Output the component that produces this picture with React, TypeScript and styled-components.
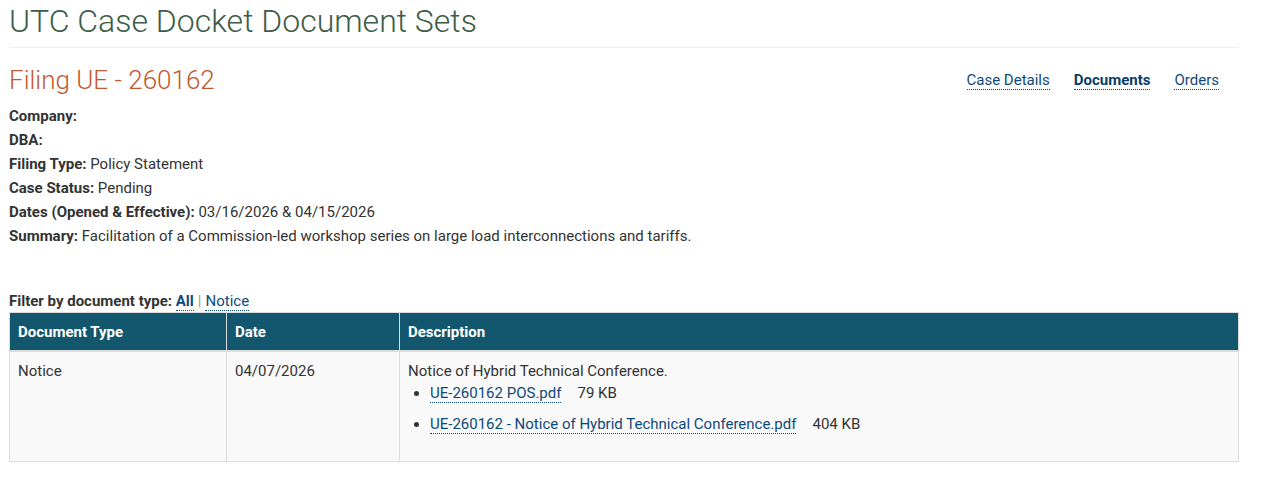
import React from "react";
import styled, { createGlobalStyle, css } from "styled-components";

const GlobalStyle = createGlobalStyle`
  html, body {
    margin: 0;
    padding: 0;
    background: #fff;
    font-family: Roboto, "Liberation Sans", Arial, sans-serif;
    color: #333;
  }
`;

const Page = styled.div`
  width: 1230px;
  padding: 0 9px;
`;

const Title = styled.h1`
  margin: 0;
  padding-top: 1px;
  font-size: 32px;
  font-weight: 300;
  line-height: 40px;
  color: #3d5c49;
  border-bottom: 1px solid #eee;
  padding-bottom: 6px;
`;

const FilingRow = styled.div`
  display: flex;
  justify-content: space-between;
  align-items: flex-start;
  margin-top: 16px;
`;

const FilingTitle = styled.h2`
  margin: 0;
  font-size: 26px;
  font-weight: 300;
  line-height: 32px;
  color: #c4582b;
`;

const Nav = styled.nav`
  display: flex;
  gap: 24px;
  margin-top: 7px;
  margin-right: 20px;
`;

const linkStyle = css`
  color: #0d4a7c;
  text-decoration: none;
  border-bottom: 1px dotted #0d4a7c;
  cursor: pointer;
`;

const NavLink = styled.a<{ $active?: boolean }>`
  ${linkStyle};
  font-size: 15px;
  line-height: 18px;
  font-weight: ${({ $active }) => ($active ? 700 : 400)};
  color: ${({ $active }) => ($active ? "#0b3d66" : "#0d4a7c")};
`;

const Info = styled.div`
  margin-top: 8px;
  font-size: 15px;
  line-height: 24px;
`;

const InfoLine = styled.div`
  b {
    font-weight: 700;
  }
`;

const Filter = styled.div`
  margin-top: 43px;
  font-size: 15px;
  line-height: 20px;
  b {
    font-weight: 700;
  }
`;

const FilterLink = styled.a<{ $active?: boolean }>`
  ${linkStyle};
  font-weight: ${({ $active }) => ($active ? 700 : 400)};
`;

const Sep = styled.span`
  color: #999;
  margin: 0 4px;
`;

const Table = styled.table`
  width: 100%;
  margin-top: 1px;
  border-collapse: collapse;
  border: 1px solid #ddd;
  font-size: 15px;
`;

const Th = styled.th<{ $w?: number }>`
  background: #12576d;
  color: #fff;
  text-align: left;
  font-weight: 700;
  padding: 10px 8px 9px;
  line-height: 18px;
  border-left: 1px solid #ddd;
  border-bottom: 2px solid #ddd;
  width: ${({ $w }) => ($w ? `${$w}px` : "auto")};
`;

const Td = styled.td`
  background: #f9f9f9;
  vertical-align: top;
  padding: 8px 8px 26px;
  line-height: 22px;
  border-left: 1px solid #ddd;
`;

const Files = styled.ul`
  margin: 0;
  padding-left: 22px;
  list-style: disc;
`;

const FileItem = styled.li`
  margin-bottom: 9px;
  &:last-child {
    margin-bottom: 0;
  }
`;

const FileLink = styled.a`
  ${linkStyle};
`;

const Size = styled.span`
  margin-left: 16px;
`;

const files = [
  { name: "UE-260162 POS.pdf", size: "79 KB" },
  { name: "UE-260162 - Notice of Hybrid Technical Conference.pdf", size: "404 KB" },
];

export default function App() {
  return (
    <>
      <GlobalStyle />
      <Page>
        <Title>UTC Case Docket Document Sets</Title>
        <FilingRow>
          <FilingTitle>Filing UE - 260162</FilingTitle>
          <Nav>
            <NavLink>Case Details</NavLink>
            <NavLink $active>Documents</NavLink>
            <NavLink>Orders</NavLink>
          </Nav>
        </FilingRow>
        <Info>
          <InfoLine><b>Company:</b></InfoLine>
          <InfoLine><b>DBA:</b></InfoLine>
          <InfoLine><b>Filing Type:</b> Policy Statement</InfoLine>
          <InfoLine><b>Case Status:</b> Pending</InfoLine>
          <InfoLine><b>Dates (Opened &amp; Effective):</b> 03/16/2026 &amp; 04/15/2026</InfoLine>
          <InfoLine>
            <b>Summary:</b> Facilitation of a Commission-led workshop series on large load interconnections and tariffs.
          </InfoLine>
        </Info>
        <Filter>
          <b>Filter by document type:</b> <FilterLink $active>All</FilterLink>
          <Sep>|</Sep>
          <FilterLink>Notice</FilterLink>
        </Filter>
        <Table>
          <thead>
            <tr>
              <Th $w={200}>Document Type</Th>
              <Th $w={156}>Date</Th>
              <Th>Description</Th>
            </tr>
          </thead>
          <tbody>
            <tr>
              <Td>Notice</Td>
              <Td>04/07/2026</Td>
              <Td>
                Notice of Hybrid Technical Conference.
                <Files>
                  {files.map((f) => (
                    <FileItem key={f.name}>
                      <FileLink>{f.name}</FileLink>
                      <Size>{f.size}</Size>
                    </FileItem>
                  ))}
                </Files>
              </Td>
            </tr>
          </tbody>
        </Table>
      </Page>
    </>
  );
}
